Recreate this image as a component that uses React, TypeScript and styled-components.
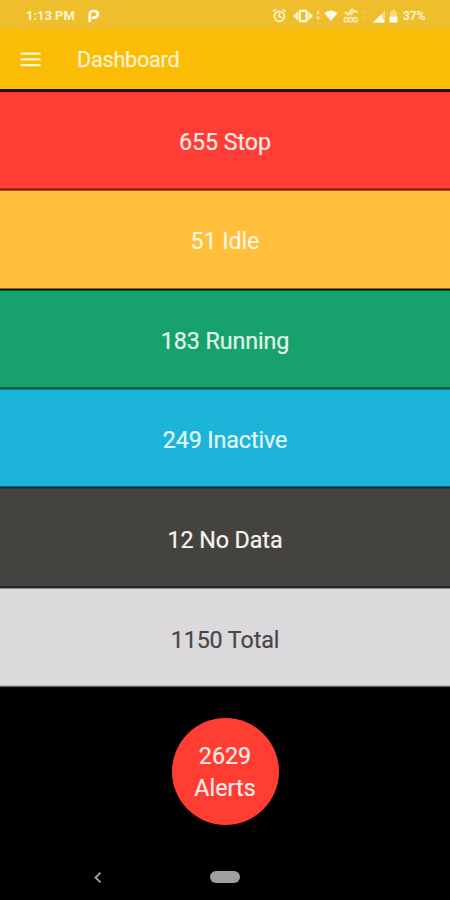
import React from "react";
import styled, { createGlobalStyle } from "styled-components";

const GlobalStyle = createGlobalStyle`
  * { box-sizing: border-box; }
  body { margin: 0; background: #000; font-family: Roboto, "Liberation Sans", sans-serif; }
`;

const Screen = styled.main`
  width: 450px;
  height: 900px;
  display: flex;
  flex-direction: column;
  background: #000;
  overflow: hidden;
`;

const StatusBar = styled.header`
  height: 29px;
  flex: none;
  display: flex;
  align-items: center;
  justify-content: space-between;
  padding: 2px 24px 0 26px;
  background: #efbe2d;
  color: #fff8dc;
  font-weight: 600;
`;

const StatusLeft = styled.div`
  display: flex;
  align-items: center;
  gap: 12px;
`;

const Clock = styled.span`
  width: 49px;
  font-size: 13px;
  white-space: nowrap;
`;

const ParkingIcon = styled.svg`
  display: block;
  width: 13px;
  height: 14px;
`;

const StatusIcons = styled.svg`
  display: block;
  width: 130px;
  height: 20px;
`;

const StatusRight = styled.div`
  display: flex;
  align-items: center;
  gap: 1px;
`;

const Battery = styled.span`
  width: 23px;
  font-size: 12px;
  letter-spacing: -0.1px;
`;

const AppBar = styled.div`
  height: 60px;
  flex: none;
  display: flex;
  align-items: center;
  gap: 36px;
  padding: 2px 20px 0;
  background: #fbbc05;
`;

const MenuIcon = styled.svg`
  display: block;
  width: 21px;
  height: 16px;
`;

const Title = styled.h1`
  margin: 0;
  color: #fff3cf;
  font-size: 21.6px;
  letter-spacing: -0.22px;
  line-height: 28px;
  font-weight: 400;
  -webkit-text-stroke: 0.25px currentColor;
`;

const StatusList = styled.section`
  flex: none;
  border-top: 3px solid #220d00;
`;

const StatusRow = styled.div<{ $bg: string; $color: string; $height: number; $top: number; $lines: string[] }>`
  height: ${(p) => p.$height}px;
  display: flex;
  align-items: flex-start;
  justify-content: center;
  padding-top: ${(p) => p.$top}px;
  color: ${(p) => p.$color};
  font-size: 23.3px;
  letter-spacing: -0.1px;
  line-height: 28px;
  -webkit-text-stroke: 0.2px currentColor;
  background:
    linear-gradient(
      to top,
      ${(p) => p.$lines[2]} 1px,
      ${(p) => p.$lines[1]} 1px 2px,
      ${(p) => p.$lines[0]} 2px 3px,
      ${(p) => p.$bg} 3px
    );
`;

const AlertsArea = styled.section`
  flex: 1;
  display: flex;
  justify-content: center;
  align-items: flex-start;
  padding-top: 30px;
`;

const AlertsButton = styled.button`
  width: 107px;
  height: 107px;
  padding: 1px 0 0;
  border: 0;
  border-radius: 50%;
  display: flex;
  flex-direction: column;
  align-items: center;
  justify-content: center;
  background: #ff3d33;
  color: #ffebe9;
  font: 400 23.3px/32px Roboto, "Liberation Sans", sans-serif;
  -webkit-text-stroke: 0.2px currentColor;
`;

const NavBar = styled.nav`
  height: 46px;
  flex: none;
  display: grid;
  grid-template-columns: 195px 60px 195px;
  justify-items: center;
  align-items: center;
`;

const BackIcon = styled.svg`
  display: block;
  width: 10px;
  height: 13px;
`;

const HomePill = styled.div`
  width: 30px;
  height: 12px;
  border-radius: 6px;
  background: #a09fa0;
`;

const rows = [
  { label: "655 Stop", bg: "#ff3d34", color: "#ffe9e5", height: 99, top: 36, lines: ["#c92722", "#7e0c08", "#a5641e"] },
  { label: "51 Idle", bg: "#ffbf3d", color: "#fff7df", height: 100, top: 36, lines: ["#8d681f", "#0b0b02", "#0b5b3b"] },
  { label: "183 Running", bg: "#17a26d", color: "#e2f6e9", height: 99, top: 36, lines: ["#0c6648", "#085843", "#137e8b"] },
  { label: "249 Inactive", bg: "#1cb4d8", color: "#e3f8fd", height: 99, top: 36, lines: ["#126579", "#062730", "#2c3b3e"] },
  { label: "12 No Data", bg: "#444340", color: "#f7f5f1", height: 100, top: 37, lines: ["#2b2a28", "#1e1c1d", "#938f93"] },
  { label: "1150 Total", bg: "#dbd9dc", color: "#48464a", height: 99, top: 37, lines: ["#b9b9ba", "#626464", "#090909"] },
];

export default function App() {
  return (
    <>
      <GlobalStyle />
      <Screen>
        <StatusBar>
          <StatusLeft>
            <Clock>1:13 PM</Clock>
            <ParkingIcon viewBox="0 0 13 14" fill="none" aria-label="Parking">
              <path d="M2.7 12V5.8C2.7 3.4 4.3 2 6.8 2s4 1.3 4 3.3-1.4 3.4-3.8 3.4H5.8" stroke="#fffbed" strokeWidth="2.7" strokeLinecap="round" />
            </ParkingIcon>
          </StatusLeft>
          <StatusRight>
            <StatusIcons viewBox="0 0 130 20" fill="none" stroke="#fff5ce" aria-label="Device status">
              <circle cx="7.3" cy="10.3" r="5" strokeWidth="1.7" />
              <path d="M1 5.5 4 3.1M10.7 3.1l3 2.4M7.3 7v3.5l2.5 1.3" strokeWidth="1.6" />
              <rect x="27.7" y="4.7" width="6.8" height="10.6" rx="1.5" strokeWidth="2.4" />
              <path d="M25 6.2v7.6M37.2 6.2v7.6M22.8 8v4M39.4 8v4" strokeWidth="1.9" />
              <path d="m44 8 2-4 2 4zM44 10.5l2 4 2-4z" fill="#fff5ce" stroke="none" opacity=".75" />
              <path d="M52.3 7.1q6.6-5 13.2 0L58.9 15z" fill="#fffbed" stroke="none" />
              <g opacity=".78">
                <path d="m72.8 6 3 2.5L80 3.5M79 3l6.5 3.5M77.5 9 82 5.5" strokeWidth="2" />
                <rect x="72.3" y="11.4" width="3.4" height="4.4" rx="1" strokeWidth="1.5" />
                <rect x="77" y="11.4" width="3.4" height="4.4" rx="1" strokeWidth="1.5" />
                <rect x="81.7" y="11.4" width="3.4" height="4.4" rx="1" strokeWidth="1.5" />
              </g>
              <path d="m91.5 7 1.5-3 1.5 3zM91.5 11l1.5 3 1.5-3z" fill="#fff5ce" stroke="none" opacity=".3" />
              <path d="M101 16.5 113 4.5v12z" fill="#fff5ce" stroke="none" opacity=".55" />
              <path d="M101 16.5 110 8v5.5h2v3z" fill="#fffbed" stroke="none" />
              <path d="M118 5.5h2V4h3v1.5h2v5h-7z" fill="#fff5ce" stroke="none" opacity=".5" />
              <path d="M117.5 10.5h8v6h-8z" fill="#fffbed" stroke="none" />
            </StatusIcons>
            <Battery>37%</Battery>
          </StatusRight>
        </StatusBar>
        <AppBar>
          <MenuIcon viewBox="0 0 21 16" aria-label="Menu">
            <path d="M.5 1.7h20M.5 7.4h20M.5 13.1h20" stroke="#fff8da" strokeWidth="2.3" />
          </MenuIcon>
          <Title>Dashboard</Title>
        </AppBar>
        <StatusList>
          {rows.map((r) => (
            <StatusRow key={r.label} $bg={r.bg} $color={r.color} $height={r.height} $top={r.top} $lines={r.lines}>
              {r.label}
            </StatusRow>
          ))}
        </StatusList>
        <AlertsArea>
          <AlertsButton>
            <span>2629</span>
            <span>Alerts</span>
          </AlertsButton>
        </AlertsArea>
        <NavBar>
          <BackIcon viewBox="0 0 10 13" fill="none" aria-label="Back">
            <path d="M7.5 1.7 2.5 6.5l5 4.8" stroke="#a5a4a5" strokeWidth="1.8" />
          </BackIcon>
          <HomePill />
        </NavBar>
      </Screen>
    </>
  );
}
